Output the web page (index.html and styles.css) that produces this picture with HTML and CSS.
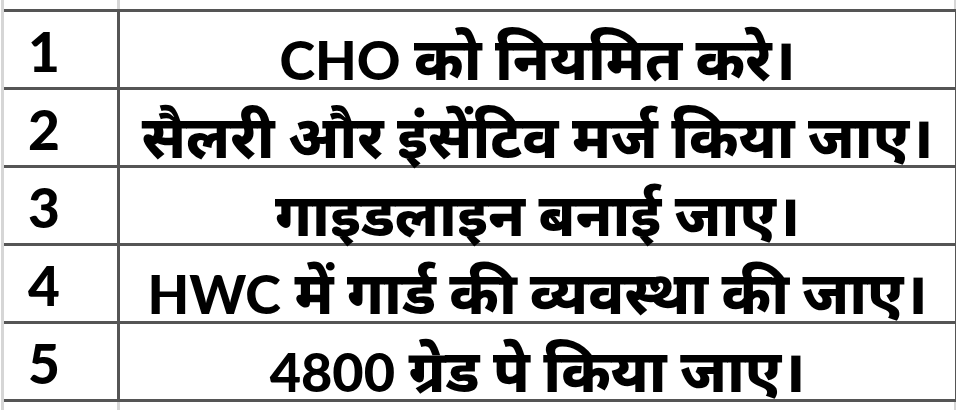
FILE: index.html
```html
<!DOCTYPE html>
<html lang="hi">
<head>
<meta charset="utf-8">
<title>Sheet</title>
<link rel="stylesheet" href="styles.css">
</head>
<body>
<div class="page">
  <div class="sheet">
    <div class="row"><div class="num">1</div><div class="txt"><span class="lat">CHO</span> को नियमित करे।</div></div>
    <div class="row"><div class="num">2</div><div class="txt">सैलरी और इंसेंटिव मर्ज किया जाए।</div></div>
    <div class="row"><div class="num">3</div><div class="txt">गाइडलाइन बनाई जाए।</div></div>
    <div class="row"><div class="num">4</div><div class="txt"><span class="lat">HWC</span> में गार्ड की व्यवस्था की जाए।</div></div>
    <div class="row"><div class="num">5</div><div class="txt"><span class="lat">4800</span> ग्रेड पे किया जाए।</div></div>
  </div>
</div>
</body>
</html>
```

FILE: styles.css
```css
html, body {
  margin: 0;
  padding: 0;
  background: #ffffff;
}
.page {
  width: 956px;
  height: 410px;
  overflow: hidden;
  padding-top: 9px;
  box-sizing: border-box;
  background-image:
    linear-gradient(to right,
      transparent 1px, #d6d6d6 1px, #d6d6d6 4px, transparent 4px,
      transparent 117px, #d6d6d6 117px, #d6d6d6 120px, transparent 120px,
      transparent 954px, #d6d6d6 954px);
}
.sheet {
  margin-left: 4px;
  width: 951px;
  border-top: 3px solid #555555;
  border-right: 3px solid #555555;
  background: #ffffff;
  font-family: "Lato", "Noto Sans Devanagari", "Noto Sans", sans-serif;
  font-weight: 800;
  color: #000000;
}
.row {
  display: flex;
  height: 78px;
  box-sizing: border-box;
  border-bottom: 3px solid #555555;
}
.num {
  width: 116px;
  box-sizing: border-box;
  border-right: 3px solid #555555;
  padding-left: 24px;
  padding-top: 5px;
  font-size: 55px;
  line-height: 69px;
  font-weight: 900;
}
.txt {
  flex: 1;
  text-align: center;
  font-size: 58.5px;
  padding-top: 16px;
  line-height: 59px;
  white-space: nowrap;
}
.lat {
  font-size: 54px;
  font-weight: 900;
}
```
